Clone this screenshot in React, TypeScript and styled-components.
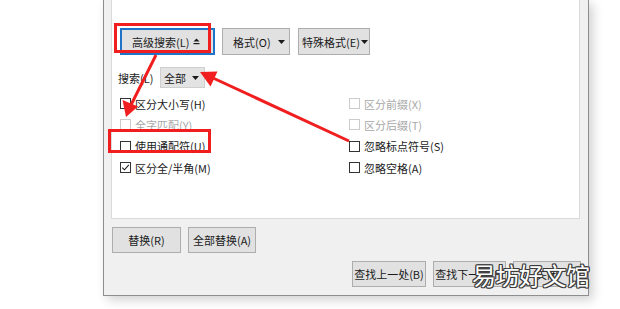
import React from 'react';
import styled, { createGlobalStyle } from 'styled-components';

const GlobalStyle = createGlobalStyle`
  html, body {
    margin: 0;
    padding: 0;
    background: #ffffff;
  }
  body {
    font-family: "Noto Sans CJK SC", "Noto Sans", sans-serif;
    font-size: 11px;
    color: #1a1a1a;
  }
`;

interface OptionItem {
  label: string;
  checked?: boolean;
  disabled?: boolean;
}

const leftOptions: Array<OptionItem> = [
  { label: '区分大小写(H)' },
  { label: '全字匹配(Y)', disabled: true },
  { label: '使用通配符(U)' },
  { label: '区分全/半角(M)', checked: true },
];

const rightOptions: Array<OptionItem> = [
  { label: '区分前缀(X)', disabled: true },
  { label: '区分后缀(T)', disabled: true },
  { label: '忽略标点符号(S)' },
  { label: '忽略空格(A)' },
];

const Caret = () => (
  <svg width="7" height="4" viewBox="0 0 7 4">
    <polygon points="0,0 7,0 3.5,4" fill="#1a1a1a" />
  </svg>
);

const LessIcon = () => (
  <svg width="7" height="7" viewBox="0 0 7 7">
    <polygon points="0.5,3.5 6.5,3.5 3.5,0.5" fill="#1a1a1a" />
    <rect x="0.5" y="5" width="6" height="1.2" fill="#1a1a1a" />
  </svg>
);

const CheckBox = ({ checked, disabled }: { checked?: boolean; disabled?: boolean }) => (
  <Box $disabled={disabled}>
    {checked && (
      <svg width="9" height="9" viewBox="0 0 9 9">
        <polyline points="1.2,4.6 3.5,6.8 7.8,1.8" fill="none" stroke="#1a1a1a" strokeWidth="1.1" />
      </svg>
    )}
  </Box>
);

const Option = ({ item }: { item: OptionItem }) => (
  <OptionRow $disabled={item.disabled}>
    <CheckBox checked={item.checked} disabled={item.disabled} />
    <span>{item.label}</span>
  </OptionRow>
);

const Annotations = () => (
  <Overlay width="620" height="309" viewBox="0 0 620 309">
    <g fill="none" stroke="#f01e1e" strokeWidth="3">
      <rect x="115.5" y="24.5" width="94" height="27" />
      <rect x="109.5" y="130.5" width="100" height="21" />
      <line x1="156" y1="55" x2="131" y2="105" />
      <line x1="349" y1="141" x2="213" y2="78" />
    </g>
    <g fill="#f01e1e">
      <polygon points="126,117 122.5,100 138,106.5" />
      <polygon points="200,72 217.5,71.5 210.5,86.5" />
    </g>
  </Overlay>
);

const App = () => {
  return (
    <Page>
      <GlobalStyle />
      <Dialog>
        <Panel>
          <ToolRow>
            <Button $width={95} $focused>
              <span>高级搜索(L)</span>
              <LessIcon />
            </Button>
            <Button $width={68} $split $padL={10} $padR={4}>
              <span>格式(O)</span>
              <Caret />
            </Button>
            <Button $width={72} $split $padL={3} $padR={1}>
              <span>特殊格式(E)</span>
              <Caret />
            </Button>
          </ToolRow>
          <SearchRow>
            <SearchLabel>搜索(L)</SearchLabel>
            <Select>
              <span>全部</span>
              <Caret />
            </Select>
          </SearchRow>
          <Options>
            {leftOptions.map((item, i) => (
              <React.Fragment key={item.label}>
                <Option item={item} />
                <Option item={rightOptions[i]} />
              </React.Fragment>
            ))}
          </Options>
        </Panel>
        <ReplaceRow>
          <Button $width={69}>替换(R)</Button>
          <Button $width={68}>全部替换(A)</Button>
        </ReplaceRow>
        <FindRow>
          <Button $width={74}>查找上一处(B)</Button>
          <Button $width={73}>查找下一处(F)</Button>
          <Button $width={68}>关闭</Button>
        </FindRow>
      </Dialog>
      <Watermark>易坊好文馆</Watermark>
      <Annotations />
    </Page>
  );
};

const Page = styled.div`
  position: relative;
  width: 620px;
  height: 309px;
  overflow: hidden;
  background: #ffffff;
`;

const Dialog = styled.div`
  margin-left: 103px;
  width: 486px;
  height: 296px;
  box-sizing: border-box;
  border: 1px solid #8e8e8e;
  border-top: none;
  background: #f0f0f0;
  box-shadow: 4px 4px 10px rgba(0, 0, 0, 0.18);
  padding: 0 8px 0 7px;
  display: flex;
  flex-direction: column;
`;

const Panel = styled.div`
  height: 219px;
  box-sizing: border-box;
  background: #ffffff;
  border: 1px solid #dadada;
  border-top: none;
  width: 469px;
  padding-left: 8px;
  display: flex;
  flex-direction: column;
`;

const ToolRow = styled.div`
  display: flex;
  margin-top: 28px;
  gap: 7px;
  & > :last-child {
    margin-left: 1px;
  }
`;

const Button = styled.div<{
  $width: number;
  $focused?: boolean;
  $split?: boolean;
  $padL?: number;
  $padR?: number;
}>`
  width: ${p => p.$width}px;
  height: ${p => (p.$focused || p.$split ? 27 : 26)}px;
  box-sizing: border-box;
  background: #e1e1e1;
  border: ${p => (p.$focused ? '2px solid #1f73c8' : '1px solid #adadad')};
  display: flex;
  align-items: center;
  justify-content: ${p => (p.$focused || p.$split ? 'space-between' : 'center')};
  padding: ${p =>
    p.$focused ? '0 13px 0 10px' : p.$split ? `0 ${p.$padR ?? 5}px 0 ${p.$padL ?? 9}px` : '0'};
  color: #1a1a1a;
  white-space: nowrap;
  svg {
    flex-shrink: 0;
  }
`;

const SearchRow = styled.div`
  display: flex;
  align-items: center;
  margin-top: 12px;
  margin-left: -2px;
  height: 21px;
`;

const SearchLabel = styled.span`
  width: 42px;
`;

const Select = styled.div`
  width: 45px;
  height: 21px;
  box-sizing: border-box;
  background: #e3e3e3;
  border: 1px solid #cfcfcf;
  display: flex;
  align-items: center;
  justify-content: space-between;
  padding: 0 5px 0 3px;
`;

const Options = styled.div`
  display: grid;
  grid-template-columns: 229px 1fr;
  grid-auto-rows: 21.3px;
  margin-top: 5px;
`;

const OptionRow = styled.div<{ $disabled?: boolean }>`
  display: flex;
  align-items: center;
  gap: 4px;
  color: ${p => (p.$disabled ? '#a8a8a8' : '#1a1a1a')};
`;

const Box = styled.span<{ $disabled?: boolean }>`
  width: 11px;
  height: 11px;
  box-sizing: border-box;
  border: 1px solid ${p => (p.$disabled ? '#cccccc' : '#333333')};
  background: #ffffff;
  display: flex;
  align-items: center;
  justify-content: center;
`;

const ReplaceRow = styled.div`
  display: flex;
  gap: 7px;
  margin-top: 8px;
  margin-left: 1px;
`;

const FindRow = styled.div`
  display: flex;
  justify-content: flex-end;
  gap: 7px;
  margin-top: 8px;
  margin-right: -1px;
`;

const Watermark = styled.div`
  position: absolute;
  left: 472px;
  top: 259px;
  font-family: "Noto Sans CJK SC", sans-serif;
  font-size: 24px;
  line-height: 32px;
  letter-spacing: -0.5px;
  color: #ffffff;
  text-shadow:
    1px 0 0 #3c3c3c, -1px 0 0 #3c3c3c, 0 1px 0 #3c3c3c, 0 -1px 0 #3c3c3c,
    1px 1px 0 #3c3c3c, -1px -1px 0 #3c3c3c, 1px -1px 0 #3c3c3c, -1px 1px 0 #3c3c3c;
`;

const Overlay = styled.svg`
  position: absolute;
  left: 0;
  top: 0;
  pointer-events: none;
`;

export default App;
